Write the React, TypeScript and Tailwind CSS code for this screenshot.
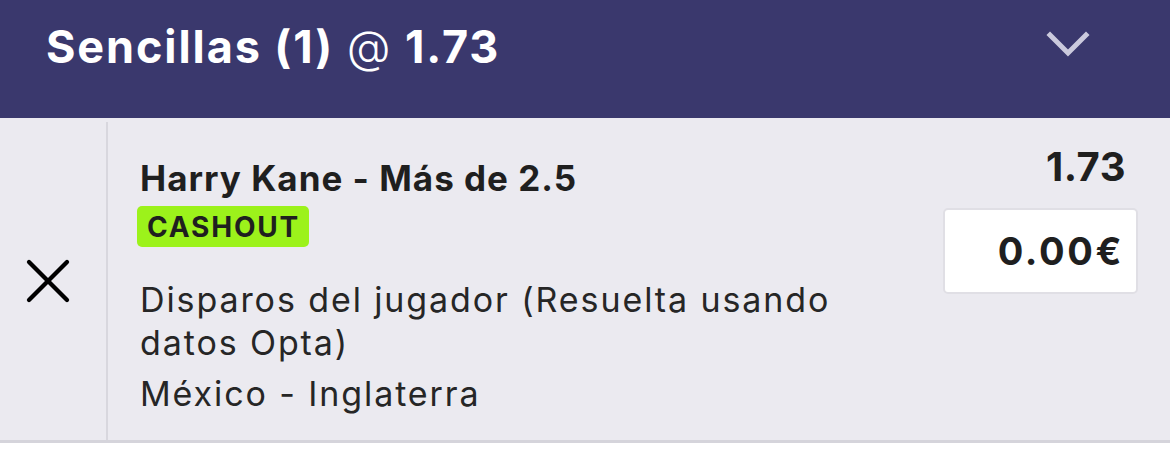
import { X } from 'lucide-react';

export default function App() {
  return (
    <div className="w-[1170px] h-[460px] bg-white font-['Inter',sans-serif] text-[#1f1f1f]">
      {/* Cabecera */}
      <div className="h-[118px] bg-[#3a386d] flex items-start justify-between pl-[46px] pr-[80px] pt-[25px]">
        <h1 className="text-[45px] leading-[44px] font-bold text-white tracking-[1.9px]">
          Sencillas (1) <span className="font-light">@</span> 1.73
        </h1>
        <svg width="44" height="30" viewBox="0 0 44 30" className="mt-[5px]" fill="none">
          <polyline
            points="4,5 22,23 40,5"
            stroke="#cbcadd"
            strokeWidth="5"
            strokeLinecap="square"
          />
        </svg>
      </div>

      {/* Apuesta */}
      <div className="h-[325px] bg-[#ebeaf0] border-b-[3px] border-[#d5d4db] flex">
        <div className="w-[108px] mt-[4px] border-r-2 border-[#d8d7de] flex items-center justify-center pr-[10px]">
          <X className="w-[76px] h-[76px] text-black" strokeWidth={1.35} />
        </div>
        <div className="flex-1 flex justify-between pl-[32px] pr-[32px] pt-[39px]">
          <div className="flex flex-col items-start">
            <div className="text-[35px] font-bold leading-[42px] tracking-[1px]">
              Harry Kane - Más de 2.5
            </div>
            <div className="bg-[#9cf21b] rounded-[5px] pl-[10px] pr-[9px] h-[41px] flex items-center text-[28px] leading-[28px] font-bold tracking-[1.8px] mt-[7px] ml-[-3px]">
              CASHOUT
            </div>
            <div className="text-[34px] leading-[43px] tracking-[1.9px] mt-[31px] w-[740px] text-[#262626]">
              Disparos del jugador (Resuelta usando datos Opta)
            </div>
            <div className="text-[34px] leading-[43px] tracking-[1.9px] mt-[8px] text-[#262626]">
              México - Inglaterra
            </div>
          </div>
          <div className="flex flex-col items-end mt-[-5px]">
            <div className="text-[40px] font-bold leading-[40px] mr-[12px] mt-[-5px] tracking-[0.5px]">1.73</div>
            <div className="mt-[21px] w-[195px] h-[86px] bg-white rounded-[5px] border-2 border-[#e0dfe5] flex items-center justify-end pr-[12px] text-[38px] font-bold tracking-[2.6px]">
              0.00€
            </div>
          </div>
        </div>
      </div>
    </div>
  );
}
